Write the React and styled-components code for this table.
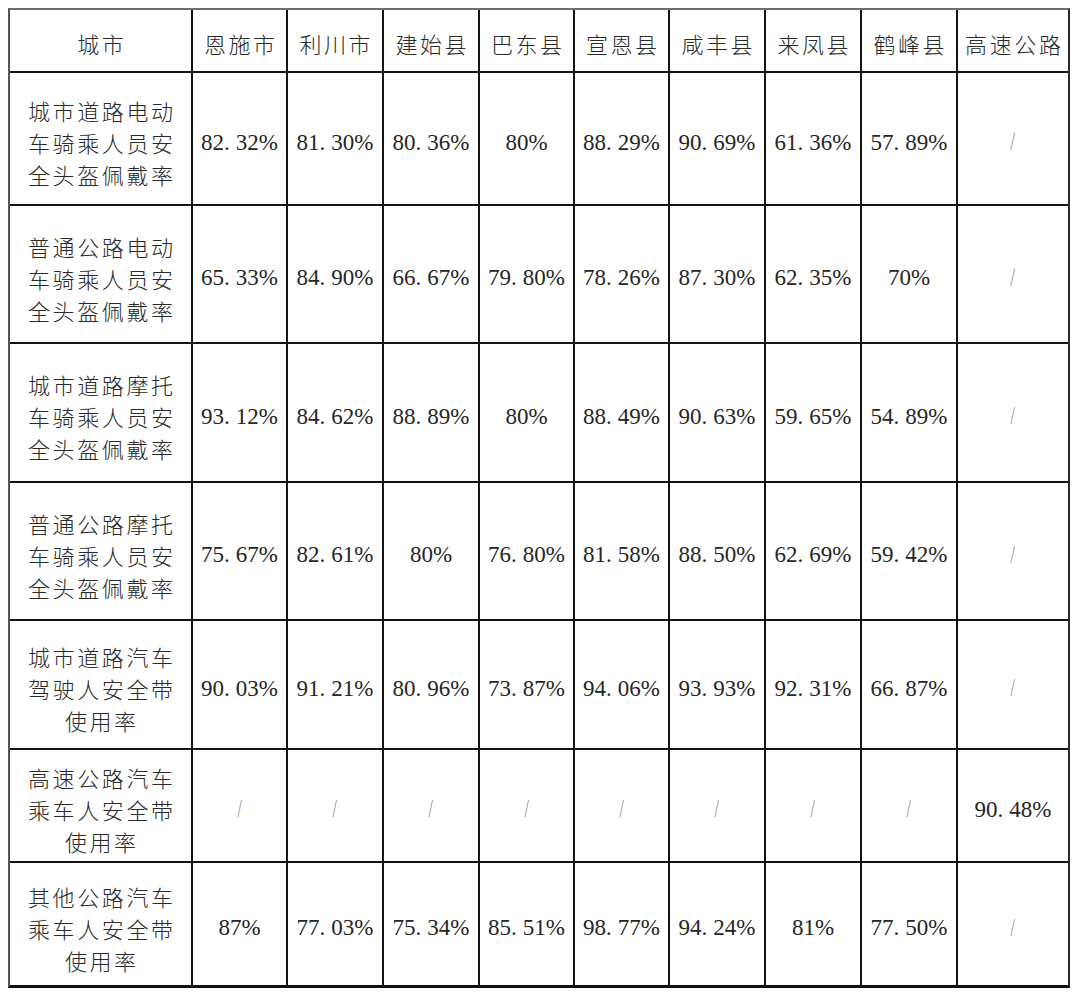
import React from "react";
import styled, { createGlobalStyle } from "styled-components";

const GlobalStyle = createGlobalStyle`
  html, body { margin: 0; padding: 0; background: #fff; }
  body { font-family: "Noto Sans CJK SC", "Noto Sans", sans-serif; }
`;

const COLS = [181, 93, 94, 94, 93, 93, 94, 94, 94, 110];
const ROWS = [61, 131, 136, 137, 136, 127, 111, 122];

const Page = styled.div`
  padding: 8px 10px 10px 8px;
  background: #fff;
`;

const Grid = styled.div`
  display: grid;
  grid-template-columns: ${COLS.map((c) => `${c}px`).join(" ")};
  grid-template-rows: ${ROWS.map((r) => `${r}px`).join(" ")};
  gap: 2px;
  background: #141414;
  width: max-content;
  border-top: 2px solid #6e6e6e;
  border-left: 2px solid #555;
  border-right: 2px solid #2a2a2a;
  border-bottom: 3px solid #111;
`;

const Cell = styled.div`
  background: #fff;
  display: flex;
  align-items: center;
  justify-content: center;
  text-align: center;
  padding: ${(p) => (p.$header ? "4px 2px 0" : "7px 2px 0")};
  box-sizing: border-box;
  overflow: hidden;
`;

const CjkText = styled.div`
  font-family: "Noto Sans CJK SC", sans-serif;
  font-weight: 300;
  font-size: 22px;
  letter-spacing: 2.6px;
  line-height: 32px;
  color: #2a2a2a;
  white-space: nowrap;
  margin-right: -2.6px;
`;

const Line = styled.div`
  display: block;
`;

const Num = styled.span`
  font-family: "Liberation Serif", "DejaVu Serif", "Times New Roman", serif;
  font-size: 23px;
  color: #262626;
  white-space: nowrap;
  line-height: 1;
`;

const Dec = styled.span`
  margin-left: 6px;
`;

const Slash = styled.span`
  display: inline-block;
  font-family: "Liberation Serif", "DejaVu Serif", serif;
  font-size: 26px;
  color: #8c8c8c;
  transform: scaleX(0.6);
  line-height: 1;
`;

const header = ["城市", "恩施市", "利川市", "建始县", "巴东县", "宣恩县", "咸丰县", "来凤县", "鹤峰县", "高速公路"];

const rows = [
  {
    label: ["城市道路电动", "车骑乘人员安", "全头盔佩戴率"],
    values: ["82.32%", "81.30%", "80.36%", "80%", "88.29%", "90.69%", "61.36%", "57.89%", "/"],
  },
  {
    label: ["普通公路电动", "车骑乘人员安", "全头盔佩戴率"],
    values: ["65.33%", "84.90%", "66.67%", "79.80%", "78.26%", "87.30%", "62.35%", "70%", "/"],
  },
  {
    label: ["城市道路摩托", "车骑乘人员安", "全头盔佩戴率"],
    values: ["93.12%", "84.62%", "88.89%", "80%", "88.49%", "90.63%", "59.65%", "54.89%", "/"],
  },
  {
    label: ["普通公路摩托", "车骑乘人员安", "全头盔佩戴率"],
    values: ["75.67%", "82.61%", "80%", "76.80%", "81.58%", "88.50%", "62.69%", "59.42%", "/"],
  },
  {
    label: ["城市道路汽车", "驾驶人安全带", "使用率"],
    values: ["90.03%", "91.21%", "80.96%", "73.87%", "94.06%", "93.93%", "92.31%", "66.87%", "/"],
  },
  {
    label: ["高速公路汽车", "乘车人安全带", "使用率"],
    values: ["/", "/", "/", "/", "/", "/", "/", "/", "90.48%"],
  },
  {
    label: ["其他公路汽车", "乘车人安全带", "使用率"],
    values: ["87%", "77.03%", "75.34%", "85.51%", "98.77%", "94.24%", "81%", "77.50%", "/"],
  },
];

function Value({ v }) {
  if (v === "/") return <Slash>/</Slash>;
  const [a, b] = v.split(".");
  if (b === undefined) return <Num>{a}</Num>;
  return (
    <Num>
      {a}.<Dec>{b}</Dec>
    </Num>
  );
}

export default function App() {
  return (
    <>
      <GlobalStyle />
      <Page>
        <Grid>
          {header.map((h) => (
            <Cell key={h} $header>
              <CjkText>{h}</CjkText>
            </Cell>
          ))}
          {rows.map((r, i) => (
            <React.Fragment key={i}>
              <Cell>
                <CjkText>
                  {r.label.map((l) => (
                    <Line key={l}>{l}</Line>
                  ))}
                </CjkText>
              </Cell>
              {r.values.map((v, j) => (
                <Cell key={j}>
                  <Value v={v} />
                </Cell>
              ))}
            </React.Fragment>
          ))}
        </Grid>
      </Page>
    </>
  );
}
